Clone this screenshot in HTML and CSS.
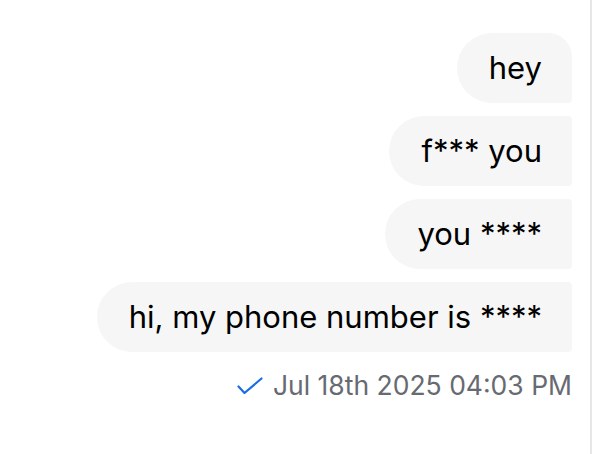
FILE: index.html
```html
<!DOCTYPE html>
<html lang="en">
<head>
    <meta charset="UTF-8">
    <meta name="viewport" content="width=device-width, initial-scale=1.0">
    <title>Chat</title>
    <link rel="stylesheet" href="styles.css">
</head>
<body>
    <div class="chat">
        <div class="message-list">
            <div class="bubble first">hey</div>
            <div class="bubble">f*** you</div>
            <div class="bubble">you ****</div>
            <div class="bubble">hi, my phone number is ****</div>
        </div>
        <div class="meta">
            <svg class="check" viewBox="0 0 26 18" width="26" height="18">
                <path d="M1.5 9.5 L7.5 16 L24.5 1.5" fill="none" stroke="#1a6de6" stroke-width="2.2" stroke-linecap="round" stroke-linejoin="round"/>
            </svg>
            <span class="time">Jul 18th 2025 04:03 PM</span>
        </div>
    </div>
</body>
</html>
```
FILE: styles.css
```css
body {
    margin: 0;
    padding: 0;
    background: #ffffff;
    font-family: 'Inter', 'Liberation Sans', sans-serif;
    color: #000000;
}

.chat {
    width: 592px;
    height: 454px;
    box-sizing: border-box;
    padding: 33px 18px 0 0;
    border-right: 2px solid #e6e6e6;
}

.message-list {
    display: flex;
    flex-direction: column;
    align-items: flex-end;
    gap: 13px;
}

.bubble {
    background: #f6f6f6;
    font-size: 31px;
    line-height: 38px;
    padding: 16px 30px 16px 32px;
    border-radius: 35px 4px 4px 35px;
}

.bubble.first {
    border-radius: 35px 24px 4px 35px;
}

.meta {
    display: flex;
    justify-content: flex-end;
    align-items: center;
    gap: 10px;
    margin-top: 17px;
}

.check {
    display: block;
    margin-top: 2px;
}

.time {
    font-size: 26.5px;
    line-height: 32px;
    color: #676a71;
}
```
